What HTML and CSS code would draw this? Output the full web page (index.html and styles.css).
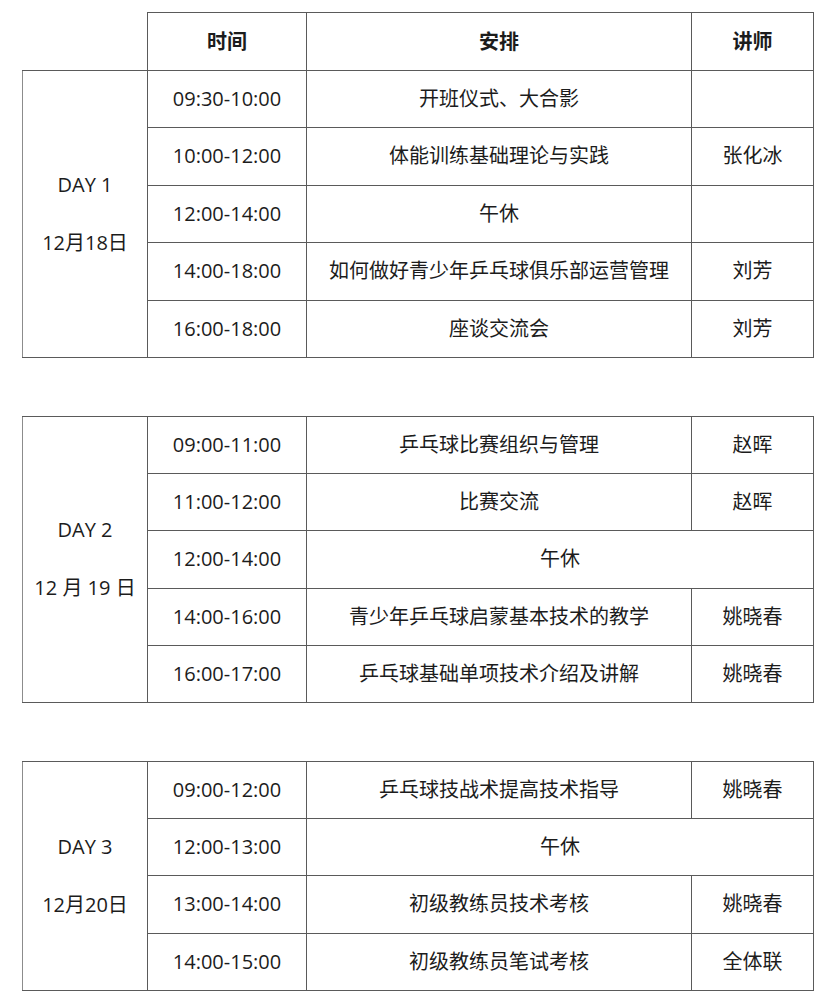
FILE: index.html
```html
<!DOCTYPE html>
<html lang="zh-CN">
<head>
<meta charset="utf-8">
<link rel="stylesheet" href="styles.css">
</head>
<body>
<div class="page">
  <table class="sched">
    <colgroup><col class="c-day"><col class="c-time"><col class="c-item"><col class="c-who"></colgroup>
    <tr class="head">
      <th class="corner"></th>
      <th>时间</th>
      <th>安排</th>
      <th>讲师</th>
    </tr>
    <tr>
      <td class="day" rowspan="5"><div class="d1">DAY 1</div><div class="d2">12月18日</div></td>
      <td>09:30-10:00</td><td>开班仪式、大合影</td><td></td>
    </tr>
    <tr><td>10:00-12:00</td><td>体能训练基础理论与实践</td><td>张化冰</td></tr>
    <tr><td>12:00-14:00</td><td>午休</td><td></td></tr>
    <tr><td>14:00-18:00</td><td>如何做好青少年乒乓球俱乐部运营管理</td><td>刘芳</td></tr>
    <tr><td>16:00-18:00</td><td>座谈交流会</td><td>刘芳</td></tr>
  </table>

  <table class="sched gap">
    <colgroup><col class="c-day"><col class="c-time"><col class="c-item"><col class="c-who"></colgroup>
    <tr>
      <td class="day" rowspan="5"><div class="d1">DAY 2</div><div class="d2">12 月 19 日</div></td>
      <td>09:00-11:00</td><td>乒乓球比赛组织与管理</td><td>赵晖</td>
    </tr>
    <tr><td>11:00-12:00</td><td>比赛交流</td><td>赵晖</td></tr>
    <tr><td>12:00-14:00</td><td colspan="2">午休</td></tr>
    <tr><td>14:00-16:00</td><td>青少年乒乓球启蒙基本技术的教学</td><td>姚晓春</td></tr>
    <tr><td>16:00-17:00</td><td>乒乓球基础单项技术介绍及讲解</td><td>姚晓春</td></tr>
  </table>

  <table class="sched gap">
    <colgroup><col class="c-day"><col class="c-time"><col class="c-item"><col class="c-who"></colgroup>
    <tr>
      <td class="day" rowspan="4"><div class="d1">DAY 3</div><div class="d2">12月20日</div></td>
      <td>09:00-12:00</td><td>乒乓球技战术提高技术指导</td><td>姚晓春</td>
    </tr>
    <tr><td>12:00-13:00</td><td colspan="2">午休</td></tr>
    <tr><td>13:00-14:00</td><td>初级教练员技术考核</td><td>姚晓春</td></tr>
    <tr><td>14:00-15:00</td><td>初级教练员笔试考核</td><td>全体联</td></tr>
  </table>
</div>
</body>
</html>
```

FILE: styles.css
```css
html, body {
  margin: 0;
  padding: 0;
  background: #ffffff;
}
.page {
  padding: 12px 0 0 22px;
  font-family: "Open Sans", "Noto Sans CJK SC", sans-serif;
  color: #1c1c1c;
  font-size: 20px;
}
.sched {
  border-collapse: collapse;
  table-layout: fixed;
  width: 791px;
}
.sched.gap {
  margin-top: 58px;
}
.c-day { width: 125px; }
.c-time { width: 159px; }
.c-item { width: 385px; }
.c-who { width: 122px; }
.sched th,
.sched td {
  border: 1px solid #5a5a5a;
  height: 56.5px;
  padding: 0;
  text-align: center;
  vertical-align: middle;
  font-weight: normal;
  line-height: 28px;
}
.sched.gap td {
  height: 56.2px;
}
.sched th {
  font-weight: bold;
  font-family: "Noto Sans CJK SC", sans-serif;
}
.sched th.corner {
  border-top: none;
  border-left: none;
}
.sched td.day {
  border-left-color: #8c8c8c;
}
.d1 {
  margin-bottom: 28px;
}
.d2 {
  padding-top: 2px;
}
```
